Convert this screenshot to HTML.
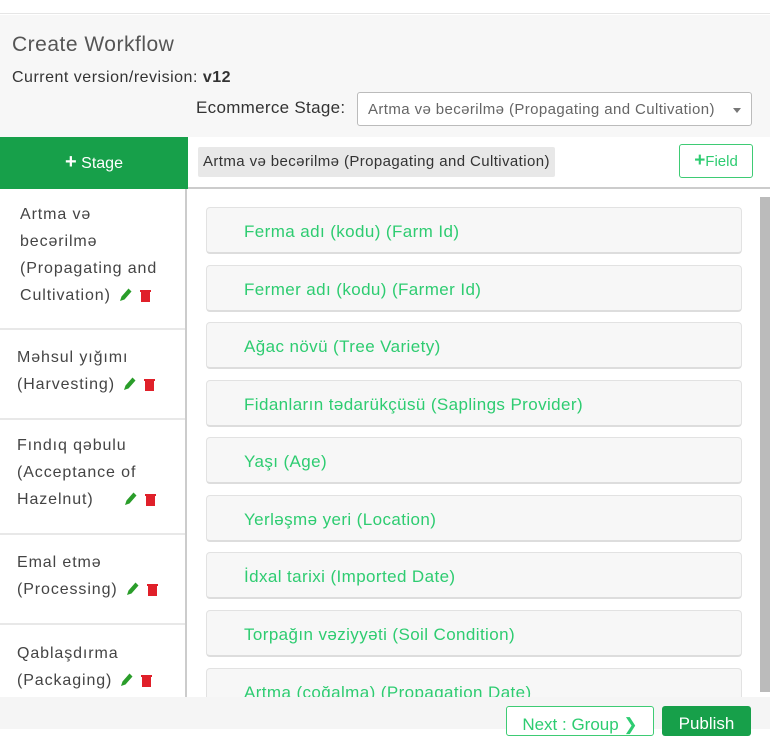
<!DOCTYPE html>
<html><head><style>
*{box-sizing:border-box;margin:0;padding:0}
body{width:770px;height:729px;overflow:hidden;background:#fff;font-family:"Liberation Sans",sans-serif;position:relative}
.top{position:absolute;left:0;top:0;width:770px;height:14px;background:#fff;border-bottom:1px solid #e6e6e6}
.hdr{position:absolute;left:0;top:15px;width:770px;height:122px;background:#f7f7f7}
.t1{position:absolute;left:12px;top:33px;font-size:21px;letter-spacing:.5px;color:#555}
.t2{position:absolute;left:12px;top:69px;font-size:16px;letter-spacing:.5px;color:#333}
.lbl{position:absolute;left:196px;top:98px;font-size:17px;letter-spacing:.3px;color:#333}
.sel{position:absolute;left:357px;top:92px;width:395px;height:34px;border:1px solid #bbb;border-radius:3px;background:#fff;font-size:15px;letter-spacing:.4px;color:#666;padding:8px 0 0 10px;white-space:nowrap}
.sel:after{content:"";position:absolute;right:10px;top:15px;border:4px solid transparent;border-top:5px solid #777}
.stage{position:absolute;left:0;top:137px;width:188px;height:52px;background:#17a04a;color:#fff;font-size:16px;text-align:center;line-height:50px}
.bar{position:absolute;left:188px;top:137px;width:582px;height:52px;background:#fff;border-bottom:2px solid #ccc}
.tag{position:absolute;left:10px;top:10px;height:30px;background:#e8e8e8;font-size:15px;letter-spacing:.4px;color:#333;padding:6px 5px;border-radius:2px;white-space:nowrap}
.fld{position:absolute;right:17px;top:7px;width:74px;height:34px;border:1px solid #3ecb74;border-radius:3px;color:#2ecc71;font-size:15px;text-align:center;line-height:32px}
.left{position:absolute;left:0;top:189px;width:187px;height:510px;border-right:2px solid #ccc;background:#fff}
.it{position:absolute;left:0;width:185px;border-bottom:2px solid #e8e8e8;font-size:16px;letter-spacing:.9px;color:#444;line-height:27px;padding-left:17px;white-space:nowrap}
.ic{display:inline-block;margin-left:8px;vertical-align:-2px}
.card{position:absolute;left:206px;width:536px;height:47px;background:#f7f7f7;border:1px solid #e2e2e2;border-bottom:2px solid #ddd;border-radius:4px;color:#2ecc71;font-size:17px;letter-spacing:.4px;padding:14px 0 0 37px}
.sb{position:absolute;left:760px;top:197px;width:10px;height:495px;background:#bbb}
.foot{position:absolute;left:0;top:697px;width:770px;height:32px;background:#f5f5f5}
.nx{position:absolute;left:506px;top:706px;width:148px;height:30px;border:1px solid #3ecb74;background:#fff;color:#2ecc71;font-size:17px;text-align:center;line-height:36px;border-radius:3px}
.pb{position:absolute;left:662px;top:706px;width:89px;height:30px;background:#17a04a;color:#fff;font-size:17px;text-align:center;line-height:36px;border-radius:3px}
</style></head><body>
<div class="top"></div>
<div class="hdr"></div>
<div class="t1">Create Workflow</div>
<div class="t2">Current version/revision: <b>v12</b></div>
<div class="lbl">Ecommerce Stage:</div>
<div class="sel">Artma və becərilmə (Propagating and Cultivation)</div>
<div class="stage"><b style="font-size:20px">+</b> Stage</div>
<div class="bar"><div class="tag">Artma və becərilmə (Propagating and Cultivation)</div><div class="fld"><b style="font-size:19px">+</b>Field</div></div>
<div class="left">
<div class="it" style="top:12px;height:129px;padding-left:20px">Artma və<br>becərilmə<br>(Propagating and<br>Cultivation)<span class="ic"><svg width="32" height="15"><path d="M1 14l1.5-4.5 7-8 3 3-7 8z" fill="#2a9d2a"/><rect x="21" y="3" width="11" height="2" fill="#e0202a"/><rect x="22" y="5" width="9" height="10" fill="#e0202a"/></svg></span></div>
<div class="it" style="top:141px;height:90px;padding-top:14px">Məhsul yığımı<br>(Harvesting)<span class="ic"><svg width="32" height="15"><path d="M1 14l1.5-4.5 7-8 3 3-7 8z" fill="#2a9d2a"/><rect x="21" y="3" width="11" height="2" fill="#e0202a"/><rect x="22" y="5" width="9" height="10" fill="#e0202a"/></svg></span></div>
<div class="it" style="top:231px;height:115px;padding-top:12px">Fındıq qəbulu<br>(Acceptance of<br>Hazelnut)<span class="ic" style="margin-left:30px"><svg width="32" height="15"><path d="M1 14l1.5-4.5 7-8 3 3-7 8z" fill="#2a9d2a"/><rect x="21" y="3" width="11" height="2" fill="#e0202a"/><rect x="22" y="5" width="9" height="10" fill="#e0202a"/></svg></span></div>
<div class="it" style="top:346px;height:90px;padding-top:14px">Emal etmə<br>(Processing)<span class="ic"><svg width="32" height="15"><path d="M1 14l1.5-4.5 7-8 3 3-7 8z" fill="#2a9d2a"/><rect x="21" y="3" width="11" height="2" fill="#e0202a"/><rect x="22" y="5" width="9" height="10" fill="#e0202a"/></svg></span></div>
<div class="it" style="top:436px;height:90px;padding-top:15px;border:0">Qablaşdırma<br>(Packaging)<span class="ic"><svg width="32" height="15"><path d="M1 14l1.5-4.5 7-8 3 3-7 8z" fill="#2a9d2a"/><rect x="21" y="3" width="11" height="2" fill="#e0202a"/><rect x="22" y="5" width="9" height="10" fill="#e0202a"/></svg></span></div>
</div>
<div class="card" style="top:207px">Ferma adı (kodu) (Farm Id)</div>
<div class="card" style="top:265px">Fermer adı (kodu) (Farmer Id)</div>
<div class="card" style="top:322px">Ağac növü (Tree Variety)</div>
<div class="card" style="top:380px">Fidanların tədarükçüsü (Saplings Provider)</div>
<div class="card" style="top:437px">Yaşı (Age)</div>
<div class="card" style="top:495px">Yerləşmə yeri (Location)</div>
<div class="card" style="top:552px">İdxal tarixi (Imported Date)</div>
<div class="card" style="top:610px">Torpağın vəziyyəti (Soil Condition)</div>
<div class="card" style="top:668px">Artma (çoğalma) (Propagation Date)</div>
<div class="sb"></div>
<div class="foot"></div>
<div class="nx">Next : Group ❯</div>
<div class="pb">Publish</div>
</body></html>
